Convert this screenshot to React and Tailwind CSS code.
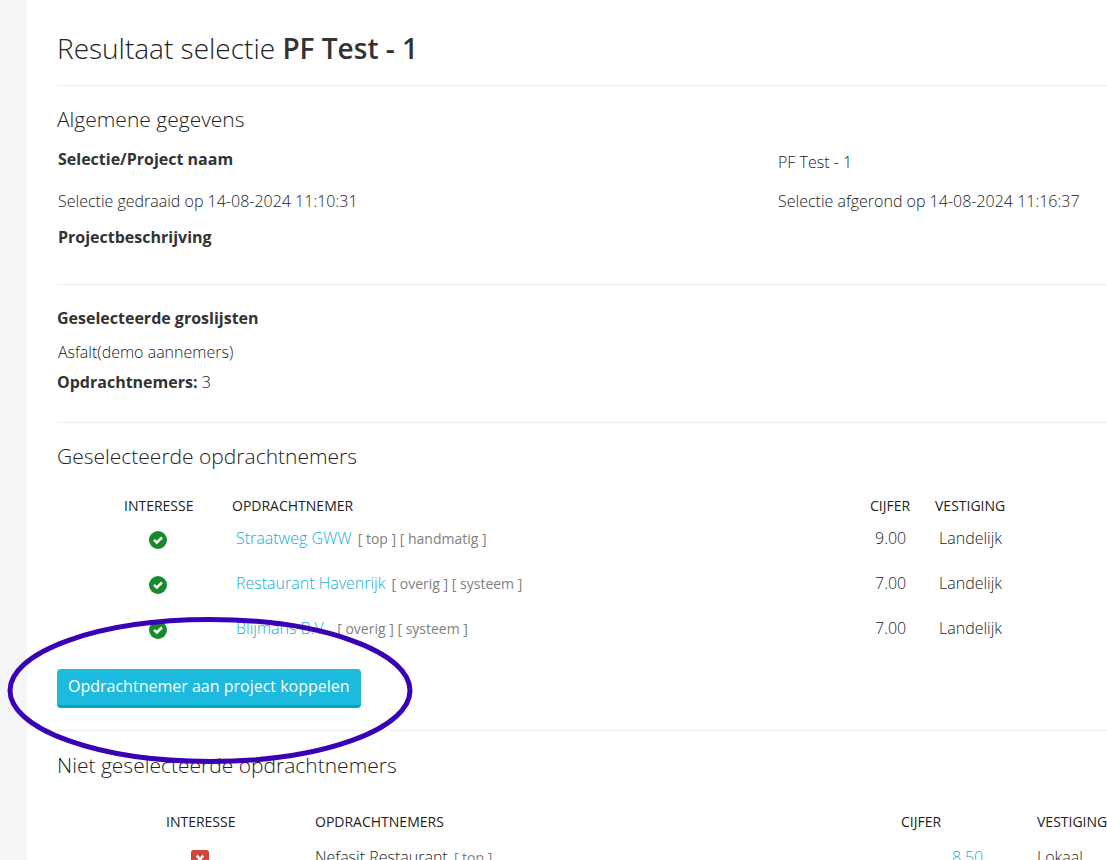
import React from "react";

const selected = [
  { name: "Straatweg GWW", tags: "[ top ] [ handmatig ]", score: "9.00", branch: "Landelijk" },
  { name: "Restaurant Havenrijk", tags: "[ overig ] [ systeem ]", score: "7.00", branch: "Landelijk" },
  { name: "Blijmans B.V.", tags: "\u00a0[ overig ] [ systeem ]", score: "7.00", branch: "Landelijk" },
];

const notSelected = [
  { name: "Nefasit Restaurant", tags: "[ top ]", score: "8.50", branch: "Lokaal" },
];

function CheckIcon() {
  return (
    <svg viewBox="0 0 18 18" className="block w-[18px] h-[18px]" role="img" aria-label="Ja">
      <circle cx="9" cy="9" r="9" fill="#168a2c" />
      <path d="M5 8.9 L7.8 11.5 L13 6.5" fill="none" stroke="#fff" strokeWidth="2.5" />
    </svg>
  );
}

function CrossIcon() {
  return (
    <svg viewBox="0 0 18 18" className="block w-[18px] h-[18px]" role="img" aria-label="Nee">
      <rect width="18" height="18" rx="2.5" fill="#d2453a" />
      <path d="M5.7 5.7 L12.3 12.3 M12.3 5.7 L5.7 12.3" stroke="#fff" strokeWidth="2.4" />
    </svg>
  );
}

function Divider({ className }) {
  return <hr className={`border-0 h-px bg-[#eeeeee] ${className}`} />;
}

function SectionTitle({ children }) {
  return <h2 className="pb-0.5 text-[21px] leading-[26px] font-light">{children}</h2>;
}

export default function App() {
  return (
    <div className="flex h-screen overflow-hidden bg-white text-[#222222] text-base font-light font-['Open_Sans',sans-serif]">
      <aside className="w-[27px] shrink-0 bg-[#f5f5f5]" />

      <main className="flex-1 min-w-0 pl-[30px] pt-7">
        <h1 className="text-[28px] leading-10">
          Resultaat selectie <strong className="font-semibold text-[#333333]">PF Test - 1</strong>
        </h1>
        <Divider className="mt-[17px] mb-5" />

        <SectionTitle>Algemene gegevens</SectionTitle>
        <div className="grid grid-cols-[720px_1fr] items-center pl-px pt-[13px] whitespace-nowrap">
          <strong className="h-[30px] font-bold text-[#333333]">Selectie/Project naam</strong>
          <span className="h-6">PF Test - 1</span>
          <span className="mt-3">Selectie gedraaid op 14-08-2024 11:10:31</span>
          <span className="mt-3">Selectie afgerond op 14-08-2024 11:16:37</span>
          <strong className="mt-3 font-bold text-[#333333]">Projectbeschrijving</strong>
        </div>
        <Divider className="mt-[35px] mb-[21px]" />

        <h3 className="font-bold text-[#333333]">Geselecteerde groslijsten</h3>
        <p className="mt-2.5 pl-px">Asfalt(demo aannemers)</p>
        <p className="mt-1.5">
          <strong className="font-bold text-[#333333]">Opdrachtnemers:</strong> 3
        </p>
        <Divider className="mt-7 mb-5" />

        <SectionTitle>Geselecteerde opdrachtnemers</SectionTitle>
        <table className="mt-[25px] w-full table-fixed text-left whitespace-nowrap">
          <thead className="text-sm leading-5 uppercase">
            <tr>
              <th className="w-[175px] pl-[67px] font-normal">Interesse</th>
              <th className="w-[638px] font-normal">Opdrachtnemer</th>
              <th className="w-[65px] font-normal">Cijfer</th>
              <th className="font-normal">Vestiging</th>
            </tr>
          </thead>
          <tbody>
            {selected.map((row) => (
              <tr key={row.name} className="h-[45px] align-top">
                <td className="pl-[92px] pt-[15px]">
                  <CheckIcon />
                </td>
                <td className="pl-1 pt-2.5">
                  <a href="#" className="mr-0.5 text-[#12aed4]">{row.name}</a>{" "}
                  <span className="text-sm font-normal text-[#808080]">{row.tags}</span>
                </td>
                <td className="pl-[5px] pt-2.5">{row.score}</td>
                <td className="pl-1 pt-2.5">{row.branch}</td>
              </tr>
            ))}
          </tbody>
        </table>

        <div className="relative mt-[18px] w-fit">
          <button
            type="button"
            className="block h-[39px] px-[11px] pb-0.5 rounded bg-[#1dbadf] border-b-[3px] border-[#06a2c8] text-white font-normal whitespace-nowrap"
          >
            Opdrachtnemer aan project koppelen
          </button>
          {/* highlight around the button */}
          <svg
            viewBox="0 0 406 148"
            className="absolute -left-[50px] -top-[52px] w-[406px] h-[148px] max-w-none pointer-events-none"
            aria-hidden="true"
          >
            <ellipse cx="203" cy="73.5" rx="200" ry="71" fill="none" stroke="#3a00b5" strokeWidth="5" />
          </svg>
        </div>
        <Divider className="mt-[22px] mb-[21px]" />

        <SectionTitle>Niet geselecteerde opdrachtnemers</SectionTitle>
        <table className="mt-8 w-full table-fixed text-left whitespace-nowrap">
          <thead className="text-sm leading-5 uppercase">
            <tr>
              <th className="w-[258px] pl-[109px] font-normal">Interesse</th>
              <th className="w-[586px] font-normal">Opdrachtnemers</th>
              <th className="w-[136px] font-normal">Cijfer</th>
              <th className="font-normal">Vestiging</th>
            </tr>
          </thead>
          <tbody>
            {notSelected.map((row) => (
              <tr key={row.name} className="h-[45px] align-top">
                <td className="pl-[134px] pt-[18px]">
                  <CrossIcon />
                </td>
                <td className="pt-[13px]">
                  <span className="mr-0.5">{row.name}</span>{" "}
                  <span className="text-sm font-normal text-[#808080]">{row.tags}</span>
                </td>
                <td className="pl-[51px] pt-[13px]">
                  <a href="#" className="text-[#12aed4]">{row.score}</a>
                </td>
                <td className="pt-[13px]">{row.branch}</td>
              </tr>
            ))}
          </tbody>
        </table>
      </main>
    </div>
  );
}
